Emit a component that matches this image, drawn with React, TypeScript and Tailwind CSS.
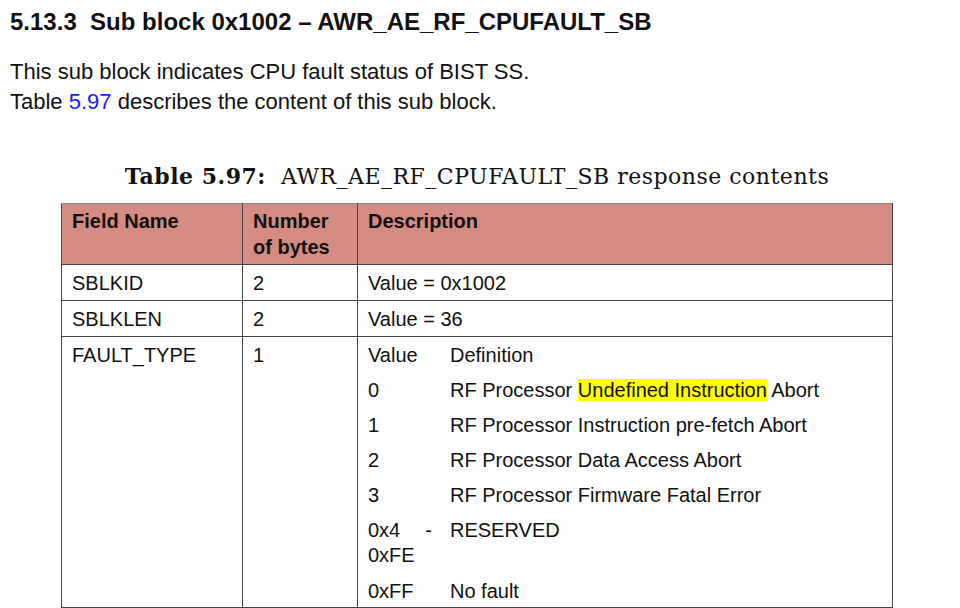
const faults: { value: string; def: React.ReactNode }[] = [
  { value: '0', def: <>RF Processor <span className="bg-[#ffff00]">Undefined Instruction</span> Abort</> },
  { value: '1', def: 'RF Processor Instruction pre-fetch Abort' },
  { value: '2', def: 'RF Processor Data Access Abort' },
  { value: '3', def: 'RF Processor Firmware Fatal Error' },
];

export default function App() {
  return (
    <div className="bg-white text-[#111] font-['Liberation_Sans',Arial,sans-serif] h-[608px] overflow-hidden">
      <h3 className="pl-[10px] pt-[7px] text-[24px] leading-[30px] font-bold">
        5.13.3&nbsp;&nbsp;Sub block 0x1002 – AWR_AE_RF_CPUFAULT_SB
      </h3>

      <div className="pl-[10px] mt-[20px] text-[22px] leading-[30px]">
        <p>This sub block indicates CPU fault status of BIST SS.</p>
        <p>
          Table <span className="text-[#1a1aff]">5.97</span> describes the content of this sub block.
        </p>
      </div>

      {/* Caption */}
      <div className="w-[832px] ml-[61px] mt-[44px] text-center font-['DejaVu_Serif',serif] text-[22px] tracking-[0.5px] leading-[30px]">
        <span className="font-bold">Table 5.97:</span>&nbsp; AWR_AE_RF_CPUFAULT_SB response contents
      </div>

      <table className="ml-[61px] mt-[11px] w-[832px] border-collapse text-[20px] table-fixed">
        <colgroup>
          <col className="w-[181px]" />
          <col className="w-[115px]" />
          <col />
        </colgroup>
        <thead>
          <tr className="bg-[#d48b82] font-bold text-left align-top leading-[26px]">
            <th className="border border-[#444] border-t-[#888] px-[10px] pt-[4px] pb-[4px] h-[61px]">Field Name</th>
            <th className="border border-[#444] border-t-[#888] px-[10px] pt-[4px] pb-[4px]">
              Number
              <br />
              of bytes
            </th>
            <th className="border border-[#444] border-t-[#888] px-[10px] pt-[4px] pb-[4px]">Description</th>
          </tr>
        </thead>
        <tbody className="align-top leading-[25px]">
          <tr>
            <td className="border border-[#444] px-[10px] h-[36px] pt-[6px]">SBLKID</td>
            <td className="border border-[#444] px-[10px] pt-[6px]">2</td>
            <td className="border border-[#444] px-[10px] pt-[6px]">Value = 0x1002</td>
          </tr>
          <tr>
            <td className="border border-[#444] px-[10px] h-[36px] pt-[6px]">SBLKLEN</td>
            <td className="border border-[#444] px-[10px] pt-[6px]">2</td>
            <td className="border border-[#444] px-[10px] pt-[6px]">Value = 36</td>
          </tr>
          <tr>
            <td className="border border-[#444] px-[10px] pt-[6px]">FAULT_TYPE</td>
            <td className="border border-[#444] px-[10px] pt-[6px]">1</td>
            <td className="border border-[#444] px-[10px] pt-[1px] pb-0">
              <div className="flex flex-col">
                <div className="flex py-[5px]">
                  <div className="w-[82px] shrink-0">Value</div>
                  <div>Definition</div>
                </div>
                {faults.map((f) => (
                  <div key={f.value} className="flex py-[5px]">
                    <div className="w-[82px] shrink-0">{f.value}</div>
                    <div>{f.def}</div>
                  </div>
                ))}
                <div className="flex pt-[5px] pb-[6px]">
                  <div className="w-[82px] shrink-0">
                    <div className="flex justify-between pr-[18px]">
                      <span>0x4</span>
                      <span>-</span>
                    </div>
                    <div>0xFE</div>
                  </div>
                  <div>RESERVED</div>
                </div>
                <div className="flex pt-[5px] pb-[3px]">
                  <div className="w-[82px] shrink-0">0xFF</div>
                  <div>No fault</div>
                </div>
              </div>
            </td>
          </tr>
        </tbody>
      </table>
    </div>
  );
}
